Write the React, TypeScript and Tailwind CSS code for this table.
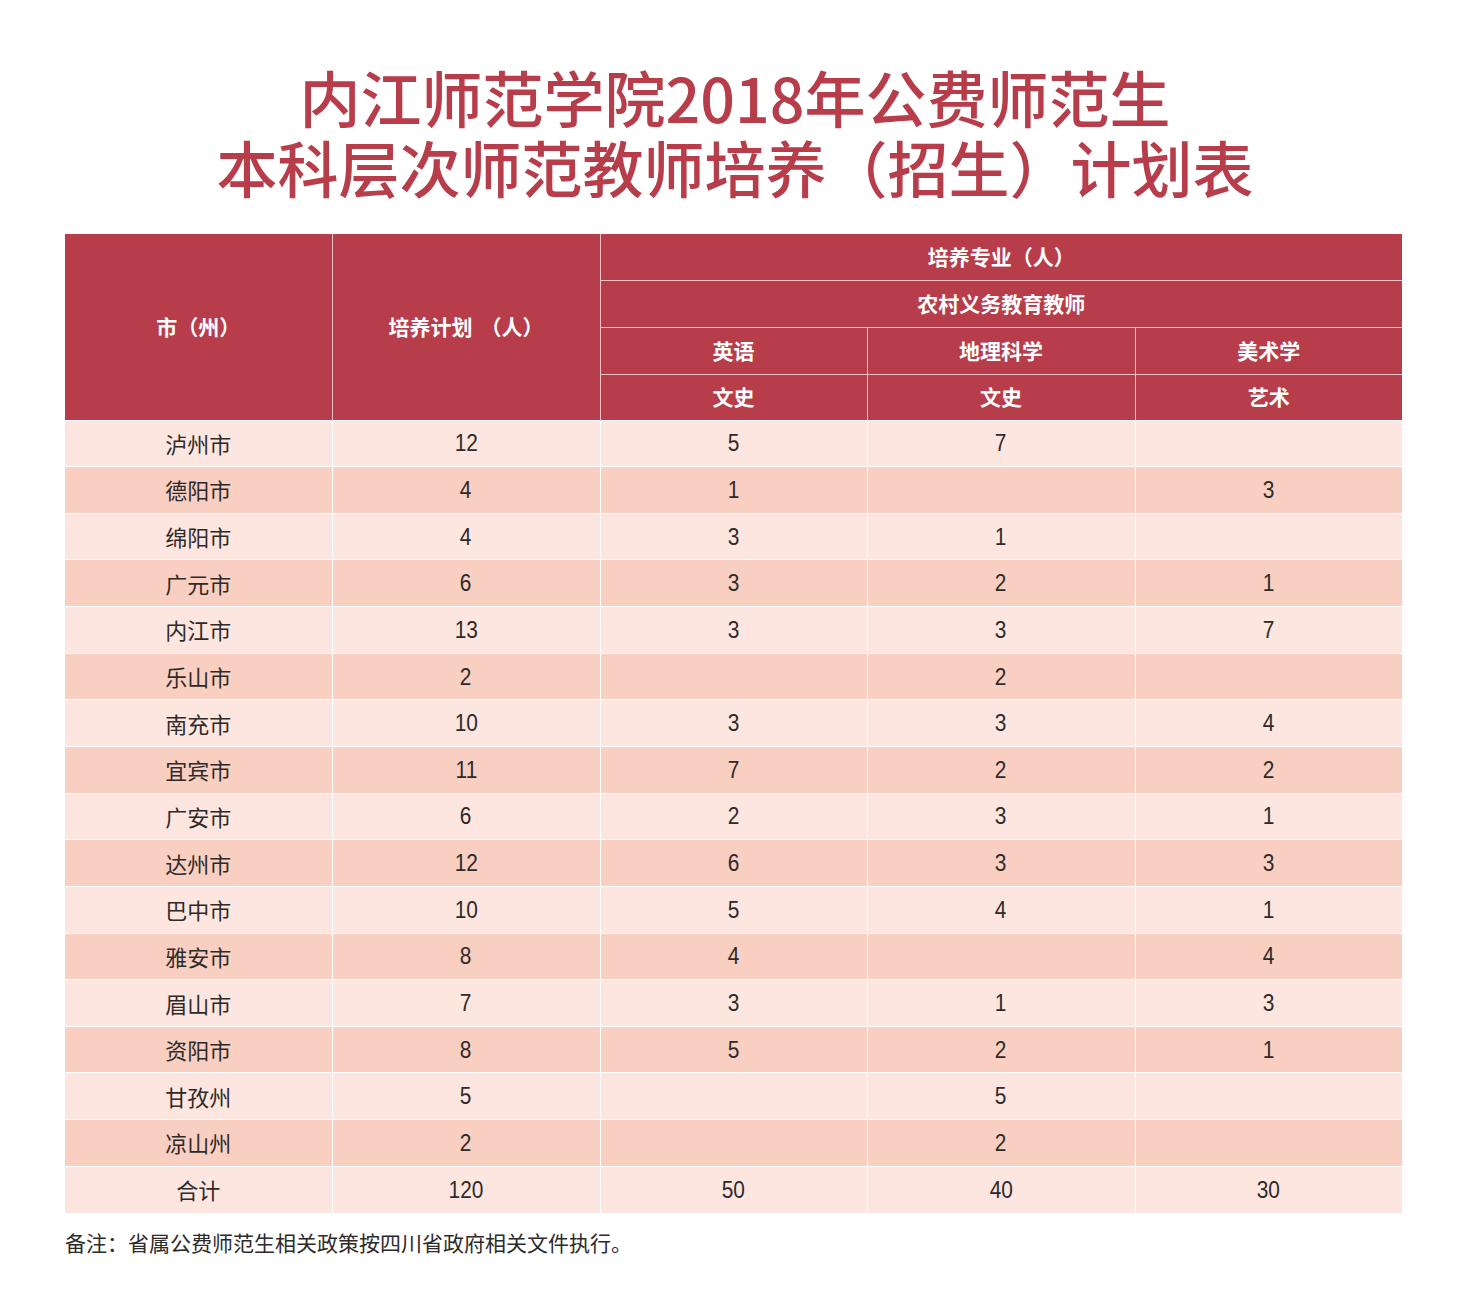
import React from "react";

const rows: [string, string, string, string, string][] = [
  ["泸州市", "12", "5", "7", ""],
  ["德阳市", "4", "1", "", "3"],
  ["绵阳市", "4", "3", "1", ""],
  ["广元市", "6", "3", "2", "1"],
  ["内江市", "13", "3", "3", "7"],
  ["乐山市", "2", "", "2", ""],
  ["南充市", "10", "3", "3", "4"],
  ["宜宾市", "11", "7", "2", "2"],
  ["广安市", "6", "2", "3", "1"],
  ["达州市", "12", "6", "3", "3"],
  ["巴中市", "10", "5", "4", "1"],
  ["雅安市", "8", "4", "", "4"],
  ["眉山市", "7", "3", "1", "3"],
  ["资阳市", "8", "5", "2", "1"],
  ["甘孜州", "5", "", "5", ""],
  ["凉山州", "2", "", "2", ""],
  ["合计", "120", "50", "40", "30"],
];

const font = { fontFamily: '"Noto Sans CJK SC", "Noto Sans", sans-serif' };
const numFont = { fontFamily: '"Liberation Sans", "Noto Sans CJK SC", sans-serif' };

export default function App() {
  return (
    <div className="w-[1470px] h-[1303px] bg-white" style={font}>
      <h1 className="pt-[62px] text-center text-[#b83d4b] font-medium text-[61px] leading-[70px]">
        内江师范学院2018年公费师范生
        <br />
        本科层次师范教师培养（招生）计划表
      </h1>
      <div className="ml-[65px] mt-[32px] w-[1337px]">
        <table className="w-full border-collapse table-fixed">
          <colgroup>
            <col className="w-[267px]" />
            <col className="w-[268px]" />
            <col className="w-[267px]" />
            <col className="w-[268px]" />
            <col className="w-[267px]" />
          </colgroup>
          <thead className="bg-[#b83d4a] text-white font-bold text-[21px]">
            <tr className="h-[46px]">
              <th rowSpan={4} className="border-r border-[#e9c3c5] font-bold">市（州）</th>
              <th rowSpan={4} className="border-r border-[#e9c3c5] font-bold">
                培养计划<span className="inline-block w-[8px]"></span>（人）
              </th>
              <th colSpan={3} className="border-b border-[#e9c3c5] font-bold">培养专业（人）</th>
            </tr>
            <tr className="h-[47px]">
              <th colSpan={3} className="border-b border-[#e9c3c5] font-bold">农村义务教育教师</th>
            </tr>
            <tr className="h-[47px]">
              <th className="border-b border-r border-[#e9c3c5] font-bold">英语</th>
              <th className="border-b border-r border-[#e9c3c5] font-bold">地理科学</th>
              <th className="border-b border-[#e9c3c5] font-bold">美术学</th>
            </tr>
            <tr className="h-[46px]">
              <th className="border-r border-[#e9c3c5] font-bold">文史</th>
              <th className="border-r border-[#e9c3c5] font-bold">文史</th>
              <th className="font-bold">艺术</th>
            </tr>
          </thead>
          <tbody className="text-[22px] text-[#2e2a2a]">
            {rows.map((r, i) => (
              <tr
                key={i}
                className={(i % 2 === 0 ? "bg-[#fce6df]" : "bg-[#f8cfc1]") + " h-[46.65px]"}
              >
                {r.map((c, j) => (
                  <td
                    key={j}
                    className={
                      "text-center border-t border-white " + (j < 4 ? "border-r" : "")
                    }
                    style={j === 0 ? font : numFont}
                  >
                    {j === 0 ? (
                      c
                    ) : (
                      <span className="inline-block text-[24px] scale-x-[0.87]">{c}</span>
                    )}
                  </td>
                ))}
              </tr>
            ))}
          </tbody>
        </table>
        <div className="mt-[14px] text-[21px] text-[#2e2a2a]">备注：省属公费师范生相关政策按四川省政府相关文件执行。</div>
      </div>
    </div>
  );
}
